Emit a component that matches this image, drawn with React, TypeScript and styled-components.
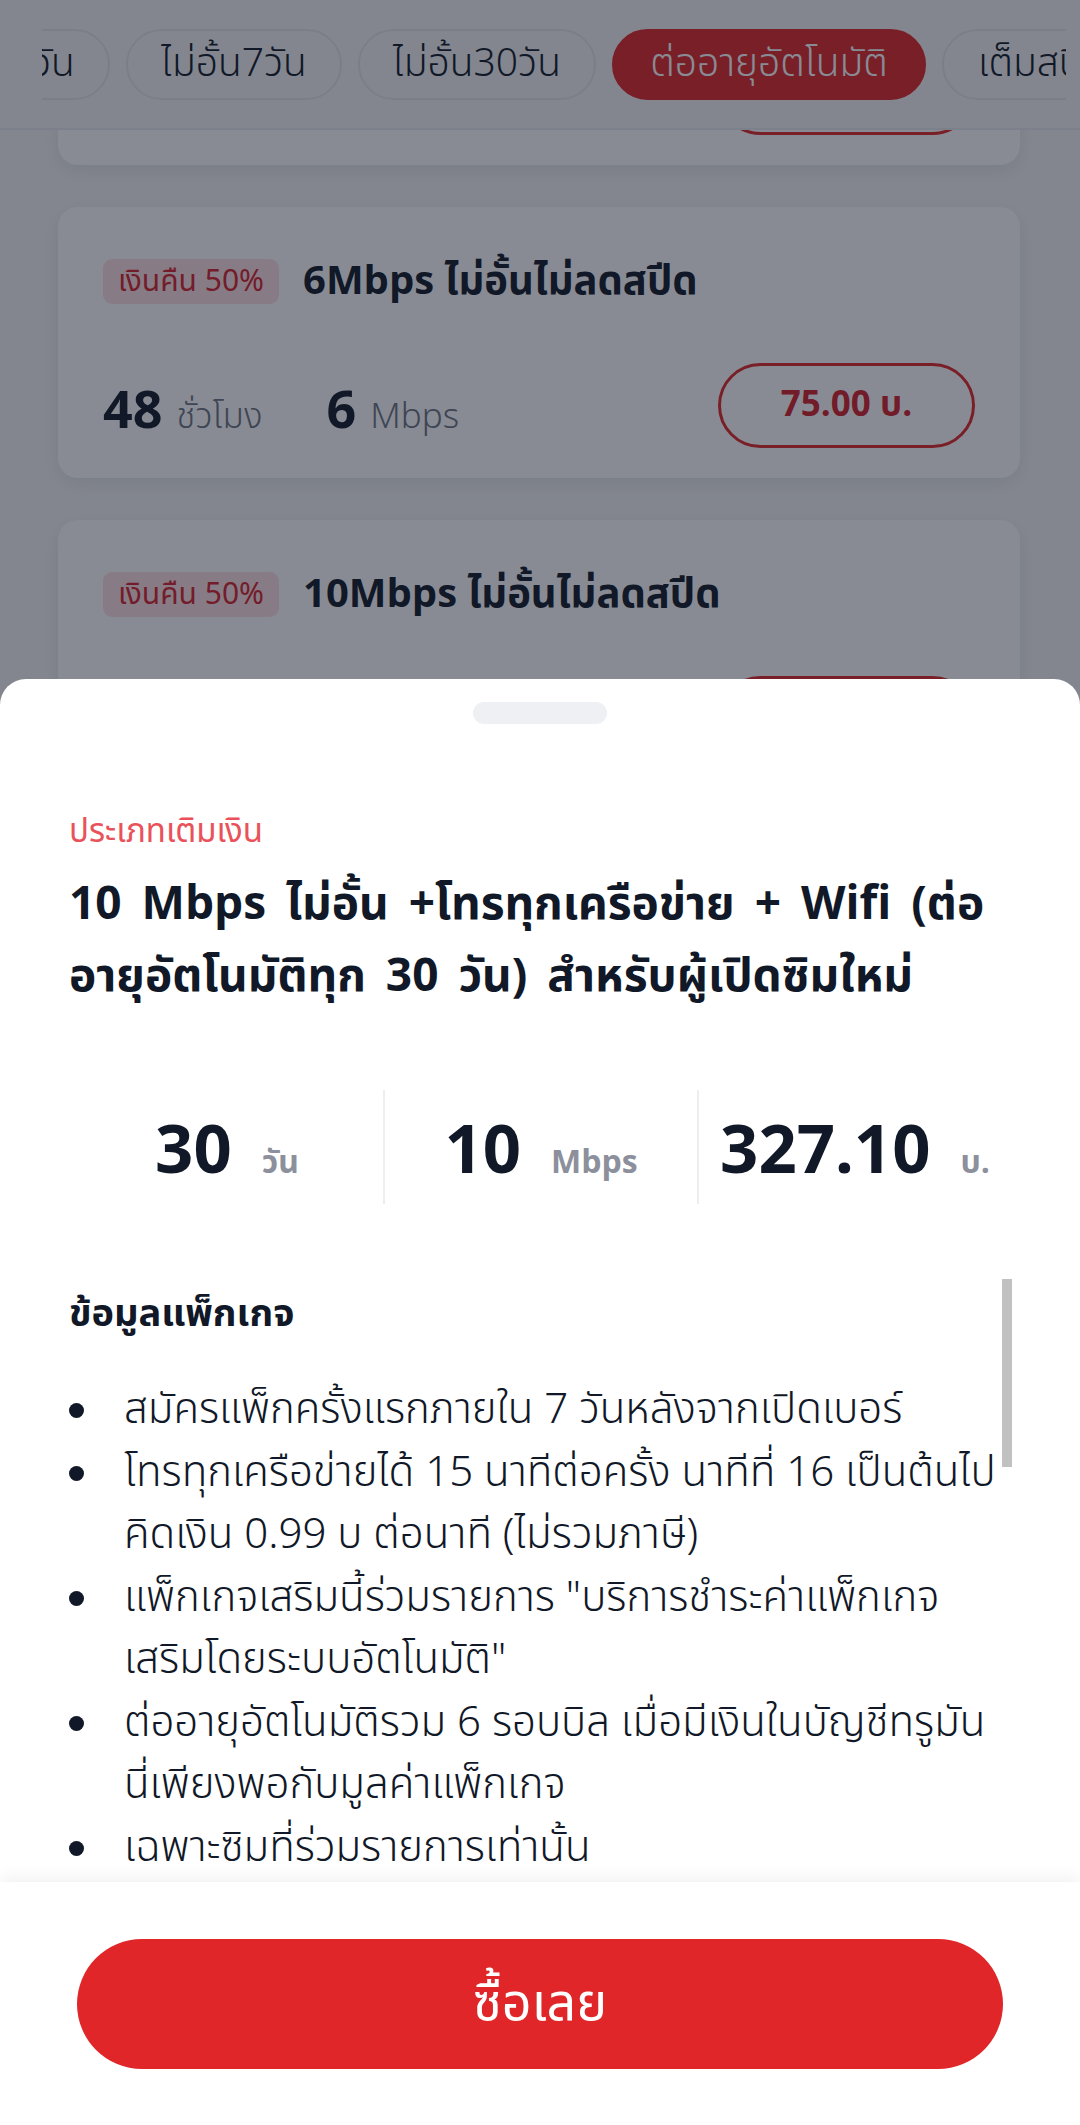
import React, { useLayoutEffect, useRef } from "react";
import styled, { createGlobalStyle } from "styled-components";

const FONT = `"Noto Sans Thai", "Noto Sans", "Noto Sans CJK SC", sans-serif`;

const GlobalStyle = createGlobalStyle`
  html {
    -webkit-text-size-adjust: none;
    text-size-adjust: none;
  }
  html, body { margin: 0; padding: 0; }
  body {
    width: 1080px;
    height: 2125px;
    overflow: hidden;
    font-family: ${FONT};
    background: #f4f5f7;
    color: #111827;
  }
  * { box-sizing: border-box; }
`;

const Screen = styled.div`
  position: relative;
  width: 1080px;
  height: 2125px;
  overflow: hidden;
`;

const Page = styled.div`
  display: flex;
  flex-direction: column;
  height: 100%;
  background: #f4f5f7;
`;

const Header = styled.header`
  flex: none;
  height: 130px;
  padding: 29px 14px 0 42px;
  background: #f4f5f7;
  border-bottom: 2px solid #e6e8ec;
`;

const ChipViewport = styled.div`
  display: flex;
  gap: 16px;
  overflow: hidden;
`;

const Chip = styled.div<{ $active?: boolean; $w: number }>`
  flex: none;
  width: ${(p) => p.$w}px;
  height: 71px;
  display: flex;
  align-items: center;
  justify-content: center;
  border-radius: 36px;
  border: 2px solid ${(p) => (p.$active ? "#e02628" : "#e3e5ea")};
  background: ${(p) => (p.$active ? "#e02628" : "transparent")};
  color: ${(p) => (p.$active ? "#ffffff" : "#111827")};
  font-size: 39px;
  font-weight: 300;
  white-space: nowrap;
`;

const List = styled.div`
  flex: 1;
  min-height: 0;
  overflow: hidden;
  padding: 30px 60px 30px 58px;
  display: flex;
  flex-direction: column;
  gap: 42px;
`;

const Card = styled.div`
  flex: none;
  background: #ffffff;
  border-radius: 20px;
  padding: 52px 45px 30px;
  box-shadow: 0 6px 18px rgba(15, 23, 42, 0.08);
  display: flex;
  flex-direction: column;
  gap: 59px;
`;

const CardTop = styled.div`
  display: flex;
  align-items: center;
  gap: 24px;
  height: 45px;
`;

const Badge = styled.span`
  height: 45px;
  padding: 0 15px;
  display: inline-flex;
  align-items: center;
  border-radius: 9px;
  background: #fde1e4;
  color: #d6232c;
  font-size: 30px;
  font-weight: 400;
  white-space: nowrap;
`;

const CardTitle = styled.h3`
  margin: 0;
  font-size: 40px;
  font-weight: 700;
  color: #111827;
  white-space: nowrap;
`;

const CardBottom = styled.div`
  display: flex;
  align-items: center;
  justify-content: space-between;
  height: 85px;
`;

const Metrics = styled.div`
  display: flex;
  align-items: baseline;
  gap: 64px;
  padding-top: 12px;
`;

const Metric = styled.div`
  display: flex;
  align-items: baseline;
  gap: 14px;
`;

const MetricValue = styled.span`
  font-size: 52px;
  font-weight: 700;
  color: #111827;
`;

const MetricUnit = styled.span`
  font-size: 35px;
  font-weight: 300;
  color: #6b7280;
`;

const PriceButton = styled.button`
  width: 257px;
  height: 85px;
  border-radius: 43px;
  border: 3px solid #e02628;
  background: #ffffff;
  color: #d3202a;
  font-family: ${FONT};
  font-size: 35px;
  font-weight: 700;
`;

const Overlay = styled.div`
  position: absolute;
  inset: 0;
  background: rgba(17, 24, 39, 0.5);
`;

const Sheet = styled.section`
  position: absolute;
  left: 0;
  right: 0;
  top: 679px;
  bottom: 0;
  background: #ffffff;
  border-radius: 26px 26px 0 0;
  display: flex;
  flex-direction: column;
`;

const Handle = styled.div`
  flex: none;
  align-self: center;
  margin-top: 23px;
  width: 134px;
  height: 22px;
  border-radius: 11px;
  background: #eef0f4;
`;

const SheetHead = styled.div`
  flex: none;
  padding: 84px 69px 0;
`;

const SubLabel = styled.div`
  font-size: 33px;
  line-height: 48px;
  font-weight: 400;
  color: #e9525a;
  white-space: nowrap;
`;

const SheetTitle = styled.h2`
  margin: 13px 0 0;
  font-size: 46px;
  line-height: 72px;
  font-weight: 700;
  color: #111827;
  word-spacing: 8px;
  white-space: nowrap;
`;

const StatsRow = styled.div`
  flex: none;
  margin: 77px 69px 0;
  display: grid;
  grid-template-columns: repeat(3, 1fr);
`;

const StatCell = styled.div<{ $divider?: boolean }>`
  height: 114px;
  display: flex;
  align-items: center;
  justify-content: center;
  border-left: 2px solid ${(p) => (p.$divider ? "#eceef1" : "transparent")};
`;

const StatGroup = styled.div`
  display: flex;
  align-items: baseline;
  gap: 30px;
`;

const StatValue = styled.span`
  font-family: "Noto Sans", sans-serif;
  font-size: 67px;
  font-weight: 700;
  color: #111827;
`;

const StatUnit = styled.span`
  font-size: 32px;
  font-weight: 700;
  color: #8c909c;
`;

const BodyFrame = styled.div`
  flex: 1;
  min-height: 0;
  position: relative;
  margin: 75px 68px 0 69px;
`;

const BodyScroll = styled.div`
  height: 100%;
  overflow: hidden;
  padding-right: 10px;
`;

const ScrollThumb = styled.div`
  position: absolute;
  top: 0;
  right: 0;
  width: 10px;
  height: 188px;
  background: #c1c1c1;
`;

const BodyInner = styled.div`
  padding-top: 12px;
`;

const InfoHeading = styled.h4`
  margin: 0;
  font-size: 38px;
  line-height: 48px;
  font-weight: 700;
  color: #111827;
  white-space: nowrap;
`;

const InfoList = styled.ul`
  margin: 40px 0 0;
  padding: 0;
  list-style: none;
`;

const InfoItem = styled.li`
  position: relative;
  padding-left: 55px;
  font-size: 42px;
  line-height: 62.5px;
  font-weight: 300;
  color: #111827;
  white-space: nowrap;
  &::before {
    content: "";
    position: absolute;
    left: 0;
    top: 24px;
    width: 15px;
    height: 15px;
    border-radius: 50%;
    background: #111827;
  }
`;

const Footer = styled.footer`
  flex: none;
  height: 243px;
  padding: 57px 77px 56px;
  background: #ffffff;
  box-shadow: 0 -6px 14px rgba(15, 23, 42, 0.05);
  position: relative;
`;

const BuyButton = styled.button`
  width: 100%;
  height: 130px;
  border: none;
  border-radius: 65px;
  background: #e02628;
  color: #ffffff;
  font-family: ${FONT};
  font-size: 52px;
  font-weight: 400;
`;

const chips = [
  { label: "ไม่อั้น1วัน", w: 216 },
  { label: "ไม่อั้น7วัน", w: 216 },
  { label: "ไม่อั้น30วัน", w: 238 },
  { label: "ต่ออายุอัตโนมัติ", w: 314, active: true },
  { label: "เต็มสปีด", w: 200 },
  { label: "โทรฟรี", w: 170 },
];

const cards = [
  { title: "4Mbps ไม่อั้นไม่ลดสปีด", time: "24", timeUnit: "ชั่วโมง", speed: "4", price: "39.00 บ." },
  { title: "6Mbps ไม่อั้นไม่ลดสปีด", time: "48", timeUnit: "ชั่วโมง", speed: "6", price: "75.00 บ." },
  { title: "10Mbps ไม่อั้นไม่ลดสปีด", time: "7", timeUnit: "วัน", speed: "10", price: "150.00 บ." },
  { title: "15Mbps ไม่อั้นไม่ลดสปีด", time: "30", timeUnit: "วัน", speed: "15", price: "350.00 บ." },
  { title: "20Mbps ไม่อั้นไม่ลดสปีด", time: "30", timeUnit: "วัน", speed: "20", price: "450.00 บ." },
  { title: "30Mbps ไม่อั้นไม่ลดสปีด", time: "30", timeUnit: "วัน", speed: "30", price: "550.00 บ." },
  { title: "50Mbps ไม่อั้นไม่ลดสปีด", time: "30", timeUnit: "วัน", speed: "50", price: "650.00 บ." },
  { title: "100Mbps ไม่อั้นไม่ลดสปีด", time: "30", timeUnit: "วัน", speed: "100", price: "850.00 บ." },
];

export default function App() {
  const chipRef = useRef<HTMLDivElement>(null);
  const activeRef = useRef<HTMLDivElement>(null);
  const listRef = useRef<HTMLDivElement>(null);

  useLayoutEffect(() => {
    if (chipRef.current && activeRef.current) {
      chipRef.current.scrollLeft = activeRef.current.offsetLeft - chipRef.current.offsetLeft - 570;
    }
    if (listRef.current) {
      listRef.current.scrollTop = 266;
    }
  }, []);

  return (
    <Screen>
      <GlobalStyle />
      <Page>
        <Header>
          <ChipViewport ref={chipRef}>
            {chips.map((c) => (
              <Chip key={c.label} $w={c.w} $active={c.active} ref={c.active ? activeRef : undefined}>
                {c.label}
              </Chip>
            ))}
          </ChipViewport>
        </Header>
        <List ref={listRef}>
          {cards.map((c) => (
            <Card key={c.title}>
              <CardTop>
                <Badge>เงินคืน 50%</Badge>
                <CardTitle>{c.title}</CardTitle>
              </CardTop>
              <CardBottom>
                <Metrics>
                  <Metric>
                    <MetricValue>{c.time}</MetricValue>
                    <MetricUnit>{c.timeUnit}</MetricUnit>
                  </Metric>
                  <Metric>
                    <MetricValue>{c.speed}</MetricValue>
                    <MetricUnit>Mbps</MetricUnit>
                  </Metric>
                </Metrics>
                <PriceButton>{c.price}</PriceButton>
              </CardBottom>
            </Card>
          ))}
        </List>
      </Page>
      <Overlay />
      <Sheet>
        <Handle />
        <SheetHead>
          <SubLabel>ประเภทเติมเงิน</SubLabel>
          <SheetTitle>
            10 Mbps ไม่อั้น +โทรทุกเครือข่าย + Wifi (ต่อ
            <br />
            อายุอัตโนมัติทุก 30 วัน) สำหรับผู้เปิดซิมใหม่
          </SheetTitle>
        </SheetHead>
        <StatsRow>
          <StatCell>
            <StatGroup>
              <StatValue>30</StatValue>
              <StatUnit>วัน</StatUnit>
            </StatGroup>
          </StatCell>
          <StatCell $divider>
            <StatGroup>
              <StatValue>10</StatValue>
              <StatUnit>Mbps</StatUnit>
            </StatGroup>
          </StatCell>
          <StatCell $divider>
            <StatGroup>
              <StatValue>327.10</StatValue>
              <StatUnit>บ.</StatUnit>
            </StatGroup>
          </StatCell>
        </StatsRow>
        <BodyFrame>
          <BodyScroll>
            <BodyInner>
              <InfoHeading>ข้อมูลแพ็กเกจ</InfoHeading>
              <InfoList>
                <InfoItem>สมัครแพ็กครั้งแรกภายใน 7 วันหลังจากเปิดเบอร์</InfoItem>
                <InfoItem>
                  โทรทุกเครือข่ายได้ 15 นาทีต่อครั้ง นาทีที่ 16 เป็นต้นไป
                  <br />
                  คิดเงิน 0.99 บ ต่อนาที (ไม่รวมภาษี)
                </InfoItem>
                <InfoItem>
                  แพ็กเกจเสริมนี้ร่วมรายการ "บริการชำระค่าแพ็กเกจ
                  <br />
                  เสริมโดยระบบอัตโนมัติ"
                </InfoItem>
                <InfoItem>
                  ต่ออายุอัตโนมัติรวม 6 รอบบิล เมื่อมีเงินในบัญชีทรูมัน
                  <br />
                  นี่เพียงพอกับมูลค่าแพ็กเกจ
                </InfoItem>
                <InfoItem>เฉพาะซิมที่ร่วมรายการเท่านั้น</InfoItem>
              </InfoList>
            </BodyInner>
          </BodyScroll>
          <ScrollThumb />
        </BodyFrame>
        <Footer>
          <BuyButton>ซื้อเลย</BuyButton>
        </Footer>
      </Sheet>
    </Screen>
  );
}
